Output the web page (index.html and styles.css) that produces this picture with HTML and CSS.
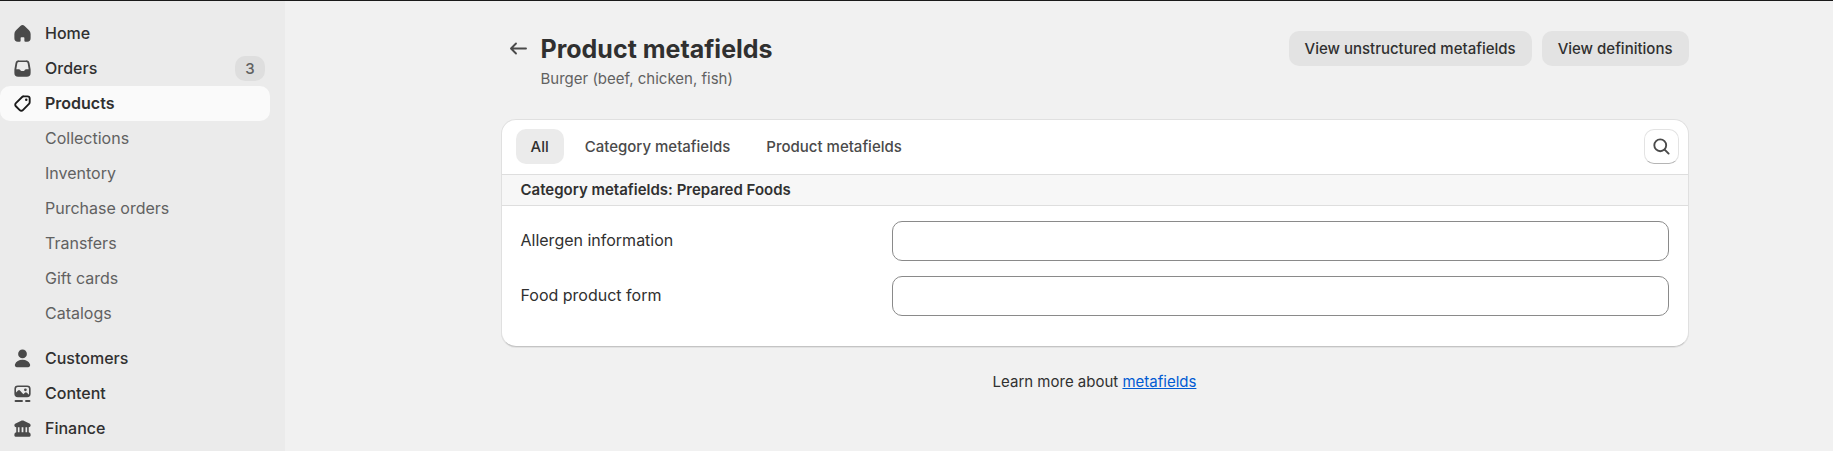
FILE: index.html
```html
<!DOCTYPE html>
<html lang="en">
<head>
<meta charset="utf-8">
<meta name="viewport" content="width=device-width, initial-scale=1">
<title>Product metafields</title>
<link rel="stylesheet" href="styles.css">
</head>
<body>
<div class="app">
  <nav class="sidebar" aria-label="Main">
    <ul class="nav-list">
      <li><a class="nav-item" href="#home">
        <svg class="icon" viewBox="0 0 20 20" aria-hidden="true"><path d="M8.3 4.05a2.5 2.5 0 0 1 3.4 0l3.5 3.3a4 4 0 0 1 1.3 2.95v3.45a2.75 2.75 0 0 1-2.75 2.75h-1.5a.75.75 0 0 1-.75-.75v-2.25a.5.5 0 0 0-.5-.5h-2a.5.5 0 0 0-.5.5v2.25a.75.75 0 0 1-.75.75h-1.5a2.75 2.75 0 0 1-2.75-2.75v-3.45a4 4 0 0 1 1.3-2.95z"/></svg>
        <span>Home</span></a></li>
      <li><a class="nav-item" href="#orders">
        <svg class="icon" viewBox="0 0 20 20" aria-hidden="true"><path fill-rule="evenodd" d="M7.2 3.5h5.6a2.9 2.9 0 0 1 2.86 2.4l.8 4.7q.04.3.04.6v2.3a3 3 0 0 1-3 3h-7a3 3 0 0 1-3-3v-2.3q0-.3.04-.6l.8-4.7a2.9 2.9 0 0 1 2.86-2.4m0 1.3a1.4 1.4 0 0 0-1.38 1.17l-.74 4.53h1.97c.5 0 .96.27 1.2.7l.18.3c.14.25.4.4.7.4h1.74a.8.8 0 0 0 .7-.4l.18-.3c.24-.43.7-.7 1.2-.7h1.97l-.74-4.53a1.4 1.4 0 0 0-1.38-1.17z"/></svg>
        <span>Orders</span><span class="count">3</span></a></li>
      <li><a class="nav-item nav-item-active" href="#products" aria-current="page">
        <svg class="icon icon-line" viewBox="0 0 20 20" aria-hidden="true"><path d="M11.1 4.25h2.9a1.75 1.75 0 0 1 1.75 1.75v2.9a2 2 0 0 1-.55 1.4l-4.9 5a1.75 1.75 0 0 1-2.5 0l-3.1-3.1a1.75 1.75 0 0 1 0-2.5l5-4.9a2 2 0 0 1 1.4-.55z"/><circle class="icon-dot" cx="13" cy="7" r="1"/></svg>
        <span>Products</span></a>
        <ul class="nav-list">
          <li><a class="nav-item nav-sub" href="#collections">Collections</a></li>
          <li><a class="nav-item nav-sub" href="#inventory">Inventory</a></li>
          <li><a class="nav-item nav-sub" href="#purchase-orders">Purchase orders</a></li>
          <li><a class="nav-item nav-sub" href="#transfers">Transfers</a></li>
          <li><a class="nav-item nav-sub" href="#gift-cards">Gift cards</a></li>
          <li><a class="nav-item nav-sub" href="#catalogs">Catalogs</a></li>
        </ul></li>
    </ul>
    <ul class="nav-list">
      <li><a class="nav-item" href="#customers">
        <svg class="icon" viewBox="0 0 20 20" aria-hidden="true"><circle cx="10" cy="6.3" r="3.5"/><path d="M10 11c-2.9 0-5.1 1.35-6 3.5-.5 1.1.35 2.5 1.6 2.5h8.8c1.25 0 2.1-1.4 1.6-2.5-.9-2.15-3.1-3.5-6-3.5"/></svg>
        <span>Customers</span></a></li>
      <li><a class="nav-item" href="#content">
        <svg class="icon" viewBox="0 0 20 20" aria-hidden="true"><path fill-rule="evenodd" d="M6.25 3.5h7.5a2.75 2.75 0 0 1 2.75 2.75v4a2.75 2.75 0 0 1-2.75 2.75h-7.5a2.75 2.75 0 0 1-2.75-2.75v-4a2.75 2.75 0 0 1 2.75-2.75m0 1.3a1.45 1.45 0 0 0-1.45 1.45v2.9l1.6-1.5a1.2 1.2 0 0 1 1.7.05l2.6 2.8 1.2-1.1a1.2 1.2 0 0 1 1.6 0l1.7 1.5v-4.65a1.45 1.45 0 0 0-1.45-1.45z"/><circle cx="12.3" cy="7" r="1.1"/><path d="M4.4 15.2h5.2a.75.75 0 0 1 0 1.5h-5.2a.75.75 0 0 1 0-1.5m8.4 0h2.8a.75.75 0 0 1 0 1.5h-2.8a.75.75 0 0 1 0-1.5"/></svg>
        <span>Content</span></a></li>
      <li><a class="nav-item" href="#finance">
        <svg class="icon" viewBox="0 0 20 20" aria-hidden="true"><path d="M9.4 3.65a1.4 1.4 0 0 1 1.2 0l4.9 2.25c.6.28 1 .87 1 1.5 0 .9-.65 1.6-1.5 1.6v4a1.75 1.75 0 0 1 1.5 1.75v.9a.85.85 0 0 1-.85.85h-11.3a.85.85 0 0 1-.85-.85v-.9a1.75 1.75 0 0 1 1.5-1.75v-4c-.85 0-1.5-.7-1.5-1.6 0-.63.4-1.22 1-1.5zM6.3 9v4h1.3v-4zm3 0v4h1.4v-4zm3.1 0v4h1.3v-4z" fill-rule="evenodd"/></svg>
        <span>Finance</span></a></li>
    </ul>
  </nav>

  <main class="main">
    <div class="page">
      <header class="page-header">
        <a class="back" href="#product" aria-label="Back to product">
          <svg class="icon icon-line" viewBox="0 0 20 20" aria-hidden="true"><path d="M16 10H4.5M8 6l-4 4 4 4"/></svg>
        </a>
        <div class="heading">
          <h1 class="title">Product metafields</h1>
          <p class="subtitle">Burger (beef, chicken, fish)</p>
        </div>
        <div class="actions">
          <button class="button" type="button">View unstructured metafields</button>
          <button class="button" type="button">View definitions</button>
        </div>
      </header>

      <section class="card">
        <div class="toolbar">
          <div class="tabs" role="tablist">
            <button class="tab tab-selected" type="button" role="tab" aria-selected="true">All</button>
            <button class="tab" type="button" role="tab" aria-selected="false">Category metafields</button>
            <button class="tab" type="button" role="tab" aria-selected="false">Product metafields</button>
          </div>
          <button class="search" type="button" aria-label="Search">
            <svg class="icon icon-line" viewBox="0 0 20 20" aria-hidden="true"><circle cx="9" cy="9" r="4.75"/><path d="M12.5 12.5l3.2 3.2"/></svg>
          </button>
        </div>
        <h2 class="group-title">Category metafields: Prepared Foods</h2>
        <form class="fields">
          <div class="field">
            <label class="field-label" for="allergen">Allergen information</label>
            <input class="field-input" id="allergen" type="text">
          </div>
          <div class="field">
            <label class="field-label" for="form">Food product form</label>
            <input class="field-input" id="form" type="text">
          </div>
        </form>
      </section>

      <p class="help">Learn more about <a class="help-link" href="#metafields">metafields</a></p>
    </div>
  </main>
</div>
</body>
</html>
```
FILE: styles.css
```css
*,
*::before,
*::after {
  box-sizing: border-box;
}

body {
  margin: 0;
  background: #f1f1f1;
  color: #303030;
  font-family: Inter, "Liberation Sans", sans-serif;
  font-size: 16px;
  line-height: 25px;
}

button,
input {
  font: inherit;
  color: inherit;
}

h1,
h2,
p,
ul {
  margin: 0;
  padding: 0;
}

.app {
  display: flex;
  height: 100vh;
  overflow: hidden;
  border-top: 1px solid #1a1a1a;
}

/* Sidebar */

.sidebar {
  display: flex;
  flex: none;
  flex-direction: column;
  gap: 10px;
  width: 285px;
  padding: 15px 15px 0 0;
  background: #ebebeb;
}

.nav-list {
  list-style: none;
}

.nav-item {
  display: flex;
  align-items: center;
  gap: 10px;
  height: 35px;
  padding: 0 5px 0 10px;
  border-radius: 10px;
  color: #303030;
  font-weight: 500;
  text-decoration: none;
}

.nav-item-active {
  background: #fafafa;
  font-weight: 600;
}

.nav-item-active .icon {
  color: #1a1a1a;
}

.nav-sub {
  padding-left: 45px;
  color: #616161;
  font-weight: 400;
}

.count {
  min-width: 30px;
  margin-left: auto;
  border-radius: 10px;
  background: #dedede;
  color: #616161;
  font-size: 15px;
  text-align: center;
}

.icon {
  display: block;
  flex: none;
  width: 25px;
  height: 25px;
  color: #4a4a4a;
  fill: currentColor;
}

.icon-line {
  fill: none;
  stroke: currentColor;
  stroke-width: 1.5;
  stroke-linecap: round;
  stroke-linejoin: round;
}

.icon-dot {
  fill: currentColor;
  stroke: none;
}

/* Page */

.main {
  flex: 1;
  min-width: 0;
  padding: 30px 30px 0 101px;
}

.page {
  max-width: 1188px;
  margin: 0 auto;
}

.page-header {
  display: flex;
  align-items: flex-start;
}

.back {
  padding: 5px 10px 5px 5px;
}

.heading {
  flex: 1;
  min-width: 0;
}

.title {
  font-size: 25px;
  font-weight: 650;
  line-height: 37px;
}

.subtitle {
  color: #616161;
  font-size: 15px;
  line-height: 21px;
}

.actions {
  display: flex;
  gap: 10px;
}

.button {
  height: 35px;
  padding: 0 16px;
  border: 0;
  border-radius: 10px;
  background: #e3e3e3;
  font-size: 15px;
  font-weight: 500;
}

/* Card */

.card {
  margin-top: 30px;
  border: 1px solid #e0e0e0;
  border-bottom-color: #c4c4c4;
  border-radius: 15px;
  background: #fff;
  box-shadow: 0 1px 0 #e2e2e2;
}

.toolbar {
  display: flex;
  align-items: center;
  justify-content: space-between;
  padding: 9px 9px 10px 14px;
}

.tabs {
  display: flex;
  gap: 6px;
}

.tab {
  height: 35px;
  padding: 0 15px;
  border: 0;
  border-radius: 10px;
  background: transparent;
  color: #4a4a4a;
  font-size: 15px;
  font-weight: 500;
}

.tab-selected {
  background: #ebebeb;
  color: #303030;
}

.search {
  padding: 4px;
  border: 1px solid #e3e3e3;
  border-bottom-color: #b5b5b5;
  border-radius: 10px;
  background: #fff;
}

.group-title {
  padding: 2px 19px 3px;
  border: solid #dedede;
  border-width: 1px 0;
  background: #f7f7f7;
  font-size: 15px;
  font-weight: 600;
}

.fields {
  display: grid;
  gap: 15px;
  padding: 15px 19px 30px;
}

.field {
  display: grid;
  grid-template-columns: 356px 1fr;
  align-items: center;
  gap: 15px;
}

.field-label {
  padding-bottom: 2px;
}

.field-input {
  width: 100%;
  height: 40px;
  padding: 0 15px;
  border: 1px solid #8a8a8a;
  border-radius: 10px;
  background: #fff;
}

.help {
  padding: 22px 0;
  font-size: 15px;
  text-align: center;
}

.help-link {
  color: #005bd3;
}
```
